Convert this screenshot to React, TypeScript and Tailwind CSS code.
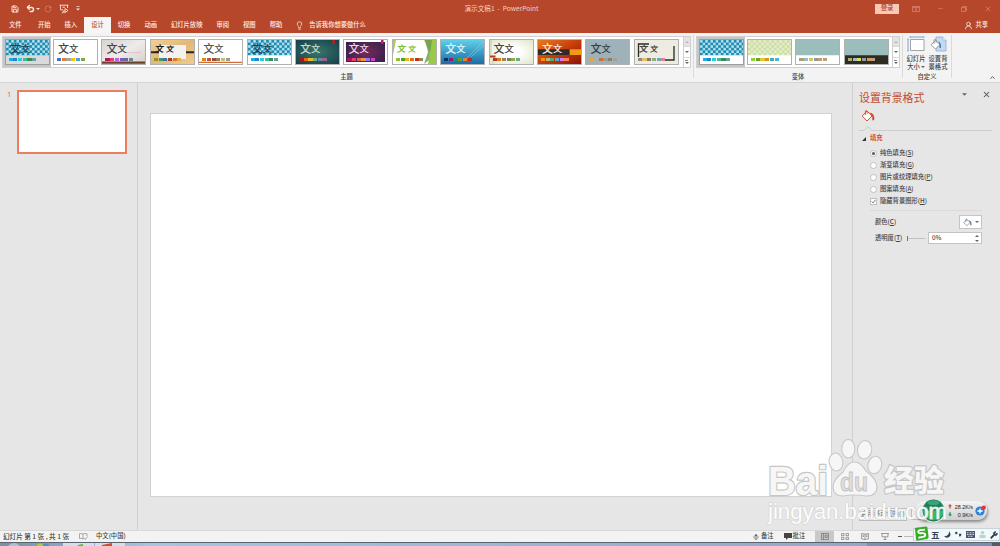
import React from "react";
import clsx from "clsx";
import { ChevronUp, Lightbulb, Minus, Save, Undo2, RotateCw, UserRound, Wrench, X } from "lucide-react";

interface Theme {
  bg: string;
  ink?: string;
  brush?: boolean;
  selected?: boolean;
  swatches: string[];
  decor?: React.ReactNode;
}

const BLUE = ["#1cade4", "#2683c6", "#27ced7", "#42ba97", "#3e8853", "#62a39f"];

const tabs = ["开始", "插入", "设计", "切换", "动画", "幻灯片放映", "审阅", "视图", "帮助"];

const themes: Theme[] = [
  { bg: "bg-[#d9dadb]", ink: "text-[#20404e]", selected: true, swatches: BLUE, decor: <Pattern id="t1" base="#1b8db5" dot="#b9e0ec" /> },
  { bg: "bg-white", ink: "text-[#444]", swatches: ["#4472c4", "#ed7d31", "#a5a5a5", "#ffc000", "#5b9bd5", "#70ad47"] },
  {
    bg: "bg-linear-to-br from-[#d8d2d0] via-[#efebea] to-[#d5cecb]",
    ink: "text-[#444]",
    swatches: ["#b31166", "#e33d6f", "#b560f0", "#7e5fa8", "#6c62b0", "#5f89a0"],
    decor: (
      <>
        <path d="M23 12.6H39" stroke="#e3a9b4" strokeWidth=".6" />
        <path d="M0 22.6H43" stroke="#6b4128" strokeWidth="2.4" />
        <path d="M0 21.5H43" stroke="#b18a5c" strokeWidth=".5" />
      </>
    ),
  },
  {
    bg: "bg-linear-to-br from-[#f0cf98] via-[#e2b878] to-[#efcc90]",
    ink: "text-[#1c1c1c]",
    brush: true,
    swatches: ["#83992a", "#3c9770", "#44709d", "#a23c33", "#d97828", "#deb340"],
    decor: (
      <>
        <path d="M0 12.3H43" stroke="#2b2724" strokeWidth="2" />
        <path d="M8 5H35V19H8Z" fill="#f3f2f0" />
      </>
    ),
  },
  {
    bg: "bg-white",
    ink: "text-[#555]",
    swatches: ["#e48312", "#bd582c", "#865640", "#9b8357", "#c2bc80", "#94a088"],
    decor: <path d="M0 22.3H43" stroke="#d46a35" strokeWidth="1.2" />,
  },
  { bg: "bg-white", ink: "text-[#20404e]", swatches: BLUE, decor: <Pattern id="t6" base="#1b8db5" dot="#b9e0ec" /> },
  {
    bg: "bg-radial from-[#39776b] to-[#163f49]",
    ink: "text-[#c9dcd7]",
    swatches: ["#b01513", "#ea6312", "#e6b729", "#6aac90", "#5f8ca0", "#9e5e9b"],
    decor: <path d="M36.5 0H39V4H36.5Z" fill="#c11d1b" />,
  },
  {
    bg: "bg-radial from-[#74295d] to-[#2b1d45] ring-2 ring-inset ring-white",
    ink: "text-[#ead6e6]",
    swatches: ["#b31166", "#e33d6f", "#e45f3c", "#e9943a", "#9b6bf2", "#d53dd0"],
    decor: <path d="M37 0H39.5V4H37Z" fill="#c01872" />,
  },
  {
    bg: "bg-white",
    ink: "text-[#7fbf2d]",
    brush: true,
    swatches: ["#90c226", "#54a021", "#e6b91e", "#e76618", "#c42f1a", "#918655"],
    decor: (
      <>
        <path d="M0 0H3L0 15Z" fill="#a4cf56" />
        <path d="M31 0H43V24H35L37 12Z" fill="#9bcb45" />
        <path d="M32 0H39L36 20L31 24L35 12Z" fill="#6a9a50" opacity=".8" />
      </>
    ),
  },
  {
    bg: "bg-linear-to-b from-[#60cfe8] to-[#1b6ea6]",
    ink: "text-[#e8f7fc]",
    swatches: ["#052f61", "#a50e82", "#14967c", "#6a9e1f", "#e87d37", "#c62324"],
    decor: <path d="M26 18L43 1M30 17L43 5" stroke="#94d9ee" strokeWidth=".5" />,
  },
  {
    bg: "bg-radial from-white from-30% to-[#dfe6c6]",
    ink: "text-[#444]",
    swatches: ["#b5391c", "#de7e18", "#9f8351", "#728653", "#92aa4c", "#6aac91"],
    decor: (
      <>
        <path d="M1 0V15M3 18V24" stroke="#aaa88f" strokeWidth=".5" />
        <path d="M0 15.5H5.5V17.5H0Z" fill="#b5391c" />
      </>
    ),
  },
  {
    bg: "bg-linear-to-br from-[#e87a1c] via-[#c73d0c] to-[#8f1203]",
    ink: "text-[#f7eae4]",
    swatches: ["#f09415", "#c1b56b", "#4baf73", "#5aa6c0", "#d17df9", "#fa7e5c"],
    decor: (
      <>
        <path d="M0 9.3H31V15H0Z" fill="#2e2b29" />
        <path d="M32 9.3H43V15H32Z" fill="#f09a18" />
      </>
    ),
  },
  { bg: "bg-[#9fb2ba]", ink: "text-[#333f45]", swatches: ["#f0a22e", "#a5b0b0", "#cf6b3c", "#93a08a", "#8a8268", "#ab9d92"] },
  {
    bg: "bg-[#eeebe1]",
    ink: "text-[#444]",
    brush: true,
    swatches: ["#8c8d86", "#e6c069", "#897b61", "#8dab8e", "#77a2bb", "#e28394"],
    decor: <path d="M3.5 17V4H14M30 20H39V6" fill="none" stroke="#262d20" strokeWidth="1.3" />,
  },
];

const variants: Theme[] = [
  { bg: "bg-white", selected: true, swatches: BLUE, decor: <Pattern id="v1" base="#1b8db5" dot="#b9e0ec" /> },
  { bg: "bg-white", swatches: ["#99cb38", "#63a537", "#e8c52a", "#d8941b", "#44a8b8", "#4eb3cf"], decor: <Pattern id="v2" base="#cddfa6" dot="#e5edcb" /> },
  { bg: "bg-white", swatches: ["#a5a07a", "#9bbfc0", "#d0c765", "#8c99a0", "#d09a5c", "#b8a088"], decor: <path d="M0 0H43V15.3H0Z" fill="#9bbebd" /> },
  { bg: "bg-[#2e2b21]", swatches: ["#b0a97c", "#9bbfc0", "#e0dc58", "#8ca0aa", "#d39a55", "#b8a080"], decor: <path d="M0 0H43V15.3H0Z" fill="#9bbebd" /> },
];

function Pattern({ id, base, dot }: { id: string; base: string; dot: string }) {
  return (
    <>
      <pattern id={id} width="5.2" height="5.2" patternUnits="userSpaceOnUse">
        <rect width="5.2" height="5.2" fill={base} />
        <rect x=".1" y=".1" width="2.5" height="2.5" rx=".5" fill={dot} />
        <rect x="2.7" y="2.7" width="2.5" height="2.5" rx=".5" fill={dot} />
      </pattern>
      <rect width="43" height="15.3" fill={`url(#${id})`} />
    </>
  );
}

function Thumb({ theme }: { theme: Theme }) {
  return (
    <div className={clsx("flex h-[30px] w-[48.4px] shrink-0 items-center justify-center", theme.selected && "bg-[#c6c6c6]")}>
      <div className={clsx("relative h-[26px] w-[45px] overflow-hidden border", theme.selected ? "border-[#9d9d9d]" : "border-[#b0b0b0]", theme.bg)}>
        <svg className="absolute inset-0 size-full" viewBox="0 0 43 24" preserveAspectRatio="none">
          {theme.decor}
        </svg>
        {theme.ink && (
          <div className={clsx("absolute top-[2px] left-[4px] flex items-center leading-[13px]", theme.ink, theme.brush && "-skew-x-6 gap-[2px] font-bold")}>
            <span className={theme.brush ? "text-[9px]" : "text-[11px]"}>文</span>
            <span className={theme.brush ? "text-[8px]" : "text-[9.3px]"}>文</span>
          </div>
        )}
        <div className="absolute bottom-[3px] left-[3px] flex gap-[0.6px]">
          {theme.swatches.map((c, i) => (
            <span key={i} className="h-[3px] w-[4.1px]" style={{ backgroundColor: c }} />
          ))}
        </div>
      </div>
    </div>
  );
}

function GalleryScroll() {
  return (
    <div className="flex w-[7.5px] flex-col border-l border-[#d0d0d0] bg-white text-[#666]">
      <div className="flex flex-1 items-center justify-center bg-[#e3e3e3]">
        <Triangle up className="fill-[#b8b8b8]" />
      </div>
      <div className="flex flex-1 items-center justify-center border-y border-[#d8d8d8]">
        <Triangle />
      </div>
      <div className="flex flex-1 flex-col items-center justify-center gap-px">
        <span className="h-px w-[3px] bg-[#888]" />
        <Triangle />
      </div>
    </div>
  );
}

function Triangle({ up, className = "fill-[#666]" }: { up?: boolean; className?: string }) {
  return (
    <svg className={clsx("h-[2px] w-[4px] shrink-0", className)} viewBox="0 0 4 2">
      <path d={up ? "M0 2L2 0L4 2Z" : "M0 0L2 2L4 0Z"} />
    </svg>
  );
}

function BucketIcon({ className, drip = "#d2472a" }: { className?: string; drip?: string }) {
  return (
    <svg className={className} viewBox="0 0 14 14" fill="none">
      <path d="M6 2L11 7L6 12L1.2 7Z" fill="white" stroke="currentColor" strokeWidth="1" />
      <path d="M4.3 6V2.2Q5.2 .4 6.2 2.2V5" stroke="currentColor" strokeWidth=".9" />
      <path d="M8.5 3.6Q14 4.5 13.2 11L11.4 11.6L11.2 7Z" fill={drip} />
    </svg>
  );
}

function TitleBar() {
  return (
    <div className="flex h-[17px] items-center text-[#fbe3da]">
      <div className="flex flex-1 items-center pl-[11px]">
        <Save className="size-[8px]" strokeWidth={3} />
        <Undo2 className="ml-[7px] size-[9px]" strokeWidth={4} />
        <Triangle className="ml-[1px] fill-[#fbe3da]" />
        <RotateCw className="ml-[4px] size-[8px] text-[#d27c65]" strokeWidth={2.4} />
        <svg className="ml-[7px] size-[10px]" viewBox="0 0 10 10" fill="none" stroke="currentColor" strokeWidth=".9">
          <path d="M.5 1.2H9.5M1.5 1.2V5.8H4M8.5 1.2V4M3 9.3L5 6.5V9.3M3.5 3.2H6" />
          <path d="M6 4.5L9 6.5L6 8.5Z" />
        </svg>
        <svg className="ml-[7px] h-[5px] w-[4px] fill-[#fbe3da]" viewBox="0 0 4 5">
          <path d="M.5 0H3.5V.8H.5ZM0 2.5H4L2 4.5Z" />
        </svg>
      </div>
      <span className="pb-px text-[6.6px] text-[#f6cfc2]">演示文稿1&nbsp; - &nbsp;PowerPoint</span>
      <div className="flex flex-1 items-center justify-end pr-[8px] text-[#d98672]">
        <span className="flex h-[10px] w-[24px] items-center justify-center bg-[#fbc8b5] text-[6.3px] font-medium text-[#a8452c]">登录</span>
        <svg className="ml-[13px] h-[6px] w-[8px]" viewBox="0 0 8 6" fill="none" stroke="currentColor" strokeWidth=".8">
          <path d="M.4 .4H7.6V5.6H.4ZM.4 1.6H7.6M4 5V2.6M3 3.6L4 2.6L5 3.6" />
        </svg>
        <Minus className="ml-[17px] size-[7px]" strokeWidth={2} />
        <svg className="ml-[17px] size-[6px]" viewBox="0 0 6 6" fill="none" stroke="currentColor" strokeWidth=".8">
          <path d="M.4 1.6H4.4V5.6H.4ZM1.6 1.6V.4H5.6V4.4H4.4" />
        </svg>
        <X className="ml-[17px] size-[8px]" strokeWidth={2.2} />
      </div>
    </div>
  );
}

function TabBar() {
  return (
    <div className="flex h-[16px] items-stretch text-[6.3px] font-medium text-[#fdeee8]">
      <div className="flex w-[31px] items-center pl-[9px]">文件</div>
      {tabs.map((tab) => (
        <div key={tab} className={clsx("flex items-center px-[7px]", tab === "设计" && "bg-[#f6f5f4] text-[#c04a2e]")}>
          {tab}
        </div>
      ))}
      <div className="flex items-center pl-[6px]">
        <Lightbulb className="mr-[5px] size-[9px]" strokeWidth={2} />
        告诉我你想要做什么
      </div>
      <div className="ml-auto flex items-center gap-[2px] pr-[12px]">
        <UserRound className="size-[9px]" strokeWidth={2} />
        共享
      </div>
    </div>
  );
}

function Ribbon() {
  return (
    <div className="flex h-[50px] border-b border-[#d4d4d4] bg-[#f3f3f3] text-[6.3px] font-medium text-[#444]">
      <div className="flex w-[691px] flex-col pt-[3px] pl-[2px]">
        <div className="flex h-[32px] justify-between border border-[#d0d0d0] bg-white">
          <div className="flex items-center">
            {themes.map((theme, i) => (
              <Thumb key={i} theme={theme} />
            ))}
          </div>
          <GalleryScroll />
        </div>
        <span className="pt-[6px] text-center">主题</span>
      </div>
      <div className="mt-[2px] ml-[2px] h-[43px] w-px bg-[#dadada]" />
      <div className="flex w-[206px] flex-col pt-[3px] pl-[2px]">
        <div className="flex h-[32px] justify-between border border-[#d0d0d0] bg-white">
          <div className="flex items-center">
            {variants.map((theme, i) => (
              <Thumb key={i} theme={theme} />
            ))}
          </div>
          <GalleryScroll />
        </div>
        <span className="pt-[6px] text-center">变体</span>
      </div>
      <div className="mt-[2px] ml-[2px] h-[43px] w-px bg-[#dadada]" />
      <div className="flex w-[48px] flex-col items-center pt-[3px] leading-[8px]">
        <div className="flex h-[37px] gap-[3px]">
          <div className="flex w-[19px] flex-col items-center whitespace-nowrap">
            <svg className="mb-[3px] h-[16px] w-[18px]" viewBox="0 0 18 16" fill="none">
              <path d="M3.5 3.5H17V14.5H3.5Z" fill="white" stroke="#8e8e8e" strokeWidth=".8" />
              <path d="M3 1H17M1 3V15" stroke="#77a5d4" strokeWidth="1" />
              <path d="M3 0V2M17 0V2M0 3H2M0 15H2" stroke="#77a5d4" strokeWidth=".6" />
            </svg>
            <span>幻灯片</span>
            <span className="flex items-center gap-px">大小 <Triangle className="h-[2px] w-[3px] fill-[#666]" /></span>
          </div>
          <div className="flex w-[19px] flex-col items-center whitespace-nowrap">
            <svg className="mb-[3px] h-[16px] w-[17px]" viewBox="0 0 17 16" fill="none">
              <path d="M6 1H13L16 4V15H6Z" fill="#c5daf1" stroke="#87aedb" strokeWidth=".8" />
              <path d="M13 1V4H16" fill="white" stroke="#87aedb" strokeWidth=".6" />
              <path d="M5.5 4.5L10 8.5L5.5 13L1 8.8Z" fill="white" stroke="#858585" strokeWidth=".8" />
              <path d="M4 8V4Q5 2.4 6 4V7" stroke="#858585" strokeWidth=".7" />
              <path d="M8.5 5.5Q11.5 7 11 12L9.5 12V9Z" fill="#3c78bd" />
            </svg>
            <span>设置背</span>
            <span>景格式</span>
          </div>
        </div>
        <span>自定义</span>
      </div>
      <div className="mt-[2px] h-[43px] w-px bg-[#dadada]" />
      <ChevronUp className="mt-auto mr-[4px] mb-[1px] ml-auto size-[7px]" strokeWidth={3} />
    </div>
  );
}

function FillOption({ label, accel, checked, box }: { label: string; accel: string; checked?: boolean; box?: boolean }) {
  return (
    <label className="flex h-[12.1px] items-center gap-[3px]">
      <span className={clsx("flex size-[7px] items-center justify-center border border-[#c0c0c0] bg-white", !box && "rounded-full")}>
        {checked && !box && <span className="size-[3px] rounded-full bg-[#555]" />}
        {checked && box && (
          <svg className="size-[5px]" viewBox="0 0 5 5" fill="none" stroke="#555" strokeWidth=".8">
            <path d="M.7 2.5L2 3.9L4.4 .9" />
          </svg>
        )}
      </span>
      <span>
        {label}(<u>{accel}</u>)
      </span>
    </label>
  );
}

function FormatPane() {
  return (
    <aside className="flex w-[148px] flex-col border-l border-[#cfcfcf] pr-[8px] pl-[6px] text-[6.3px] font-medium text-[#444]">
      <div className="flex h-[27px] items-center pt-px">
        <h2 className="text-[10.9px] font-normal text-[#c24a31]">设置背景格式</h2>
        <Triangle className="mb-[5px] ml-auto h-[3px] w-[5px] fill-[#666]" />
        <X className="mr-px mb-[5px] ml-[15px] size-[9px] text-[#555]" strokeWidth={2.8} />
      </div>
      <BucketIcon className="-mt-px ml-[2px] size-[14px] text-[#d4542f]" />
      <svg className="mt-[3px] h-[5px] w-full shrink-0" viewBox="0 0 133 5" fill="none" stroke="#cacaca">
        <path d="M0 4.5H5L9 .8L13 4.5H133" strokeWidth=".9" />
      </svg>
      <div className="flex h-[15px] items-center pl-[3px] font-bold text-[#d8502c]">
        <svg className="mr-[4px] size-[4px] fill-[#333]" viewBox="0 0 4 4">
          <path d="M4 0V4H0Z" />
        </svg>
        填充
      </div>
      <div className="mt-[1px] flex flex-col pl-[11px]">
        <FillOption label="纯色填充" accel="S" checked />
        <FillOption label="渐变填充" accel="G" />
        <FillOption label="图片或纹理填充" accel="P" />
        <FillOption label="图案填充" accel="A" />
        <FillOption label="隐藏背景图形" accel="H" checked box />
        <div className="mt-[3px] mr-[10px] border-t border-[#dadada]" />
      </div>
      <div className="mt-[3px] flex h-[16px] items-center justify-between pr-[10px] pl-[16px]">
        <span>颜色(<u>C</u>)</span>
        <div className="flex h-[14px] w-[23px] items-center justify-center gap-[3px] border border-[#c4c4c4] bg-white">
          <BucketIcon className="size-[9px] text-[#777]" drip="#3e6f9f" />
          <Triangle />
        </div>
      </div>
      <div className="flex h-[16px] items-center pr-[10px] pl-[16px]">
        <span>透明度(<u>T</u>)</span>
        <span className="ml-[5px] h-[5px] w-px bg-[#777]" />
        <span className="h-px w-[17px] bg-[#c0c0c0]" />
        <div className="ml-auto flex h-[12px] w-[54px] items-center justify-between border border-[#c4c4c4] bg-white pr-[2px] pl-[3px]">
          0%
          <span className="flex flex-col gap-[3px]">
            <Triangle up />
            <Triangle />
          </span>
        </div>
      </div>
    </aside>
  );
}

function StatusBar() {
  return (
    <div className="flex h-[12px] items-center border-t border-[#d8d8d8] bg-[#f3f3f3] text-[6.3px] font-medium text-[#444]">
      <span className="pl-[3px] text-[6.6px]">幻灯片 第 1 张 , 共 1 张</span>
      <svg className="mr-[8px] ml-[10px] h-[7px] w-[9px]" viewBox="0 0 9 7" fill="none" stroke="#888" strokeWidth=".7">
        <path d="M4 1V6Q2.5 5 .5 5.5V.8Q2.5 0 4 1Q5.5 0 8 .8V3M4 6L5 5.5M5.5 5L6.5 6.5L8.5 3.5" />
      </svg>
      <span>中文(中国)</span>
      <div className="ml-auto flex h-full w-[247px] items-center">
        <svg className="mr-[2px] size-[6px]" viewBox="0 0 6 6" stroke="#555" strokeWidth=".6">
          <path d="M3 .2L4.2 1.8H1.8ZM0 3H6M1.2 4.3H4.8M2 5.6H4" fill="#555" />
        </svg>
        备注
        <svg className="mr-[1px] ml-[10px] h-[7px] w-[8px] fill-[#444]" viewBox="0 0 8 7">
          <path d="M0 0H8V5H4L2 7V5H0Z" />
        </svg>
        批注
        <span className="ml-[10px] flex h-full w-[19px] items-center justify-center bg-[#c9c9c9]">
          <svg className="h-[7px] w-[8px]" viewBox="0 0 8 7" fill="none" stroke="#777" strokeWidth=".8">
            <path d="M.4 .4H7.6V6.6H.4ZM2.4 .4V6.6M4 2.2H6.2V4.5H4Z" />
          </svg>
        </span>
        <svg className="ml-[7px] h-[7px] w-[8px]" viewBox="0 0 8 7" fill="none" stroke="#777" strokeWidth=".7">
          <path d="M.4 .4H3V2.6H.4ZM5 .4H7.6V2.6H5ZM.4 4.3H3V6.5H.4ZM5 4.3H7.6V6.5H5Z" />
        </svg>
        <svg className="ml-[12px] h-[7px] w-[8px]" viewBox="0 0 8 7" fill="none" stroke="#777" strokeWidth=".7">
          <path d="M4 1V6.5M.4 .5L4 1.2L7.6 .5V5.8L4 6.5L.4 5.8ZM1.5 2.2H3M1.5 3.5H3M5 2.2H6.6M5 3.5H6.6" />
        </svg>
        <svg className="ml-[12px] h-[7px] w-[8px]" viewBox="0 0 8 7" fill="none" stroke="#777" strokeWidth=".7">
          <path d="M0 .5H8M1 .5V3.8H7V.5M4 3.8V6.4M2.5 6.5H5.5" />
        </svg>
        <span className="ml-[9px] h-px w-[4px] bg-[#555]" />
        <span className="ml-[2px] h-px w-[12px] bg-[#bbb]" />
      </div>
    </div>
  );
}

function Taskbar() {
  return (
    <div className="flex h-[4px] border-t border-[#59646f] bg-linear-to-r from-[#7890aa] via-[#a5c4e6] via-15% to-[#8aa5c2]">
      <svg className="h-[4px] w-[126px]" viewBox="0 0 126 4">
        <circle cx="14" cy="7" r="7" fill="#a7c4d6" />
        <circle cx="40" cy="4" r="3.4" fill="#b8c832" />
        <circle cx="46" cy="4" r="3.4" fill="#3d98d0" />
        <path d="M63 0H94V4H63ZM95 0H125V4H95Z" fill="#d4dfeb" />
        <path d="M76 4Q78 1 83 1V4Z" fill="#64b94b" />
        <path d="M102 2L112 0V4H102Z" fill="#cf4c2c" />
      </svg>
      <div className="ml-auto h-full w-[125px] bg-[#627d9c] opacity-50" />
      <div className="h-full w-[8px] bg-[#4e5d6e]" />
    </div>
  );
}

// Network speed ball of the desktop assistant
function SpeedWidget() {
  return (
    <div className="absolute top-[501px] left-[915px] flex h-[19px] w-[72px] items-center rounded-full bg-linear-to-b from-[#f4f4f4] to-[#cfcfcf] text-[5.4px] leading-[8px] text-[#222] shadow-[1px_2px_3px_rgba(0,0,0,0.4)]">
      <svg className="ml-[6px] size-[25px] shrink-0" viewBox="0 0 25 25">
        <circle cx="12.5" cy="12.5" r="12" fill="#e6efe9" />
        <circle cx="12.5" cy="12.5" r="11" fill="#16835a" />
        <path d="M1.6 12.5H23.4A11 11 0 0 1 1.6 12.5Z" fill="#38b866" />
        <ellipse cx="12.5" cy="4.7" rx="6" ry="2.4" fill="#5bb592" opacity=".6" />
      </svg>
      <svg className="ml-[2px] h-[13px] w-[4px] shrink-0" viewBox="0 0 4 13">
        <path d="M2 0L4 2.2H2.6V4.5H1.4V2.2H0Z" fill="#e23b2c" />
        <path d="M2 12.5L4 10.3H2.6V8H1.4V10.3H0Z" fill="#1d9a55" />
      </svg>
      <div className="flex w-[21px] flex-col items-end font-[Liberation_Sans] whitespace-nowrap">
        <span>28.2K/s</span>
        <span>0.9K/s</span>
      </div>
      <svg className="ml-[2px] size-[11px] shrink-0" viewBox="0 0 11 11">
        <circle cx="5" cy="6" r="4.6" fill="#2d7fd6" />
        <path d="M5 3.4V8.6M2.4 6H7.6" stroke="white" strokeWidth="1.3" />
        <circle cx="8.8" cy="2.6" r="2.1" fill="#e23632" />
      </svg>
    </div>
  );
}

function InputMethodBar() {
  return (
    <div className="absolute top-[528px] left-[913px] flex h-[13px] w-[87px] items-center border border-[#c9d3da] bg-[#f3f8fb] text-[#33415c]">
      <svg className="-mt-[2px] h-[15px] w-[15px] shrink-0" viewBox="0 0 15 15">
        <path d="M1 3Q0 2 2 1.8L12 .4Q13.5 .2 13.5 2L14.6 11Q14.8 12.5 13 13L4 14.6Q2.3 15 2 13.2Z" fill="#35ac22" />
        <path d="M11 3.6L6 4.1Q3.8 4.6 4.4 6.4Q4.8 7.5 7.3 7.2Q11 6.8 11.2 8.8Q11.2 10.7 9 10.9L4.4 11.7" fill="none" stroke="white" strokeWidth="1.9" />
      </svg>
      <span className="ml-[2px] text-[8.5px] leading-none font-bold">五</span>
      <svg className="ml-[4px] size-[7px] shrink-0" viewBox="0 0 7 7" fill="currentColor">
        <path d="M5 0Q8 4 5 6Q2.5 7.8 0 5.3Q5.5 5.3 5 0Z" />
      </svg>
      <svg className="ml-[4px] h-[7px] w-[7px] shrink-0" viewBox="0 0 7 7" fill="currentColor">
        <circle cx="1.3" cy="2" r="1.2" />
        <path d="M4 2.8H6.4Q6.7 5 4.2 6.3Q5.2 5 4 4.6Z" />
      </svg>
      <svg className="ml-[4px] h-[7px] w-[9px] shrink-0" viewBox="0 0 9 7">
        <path d="M0 0H9V7H0Z" fill="#4b5970" />
        <path d="M1 1.8H8M1 3.5H8M2 5.3H7" stroke="#f3f8fb" strokeWidth=".8" strokeDasharray="1 .5" />
      </svg>
      <svg className="ml-[4px] size-[7px] shrink-0 fill-[#b5d6ca]" viewBox="0 0 7 7">
        <circle cx="3.5" cy="1.8" r="1.8" />
        <path d="M.5 7V4H6.5V7Z" />
      </svg>
      <Wrench className="ml-[4px] size-[8px] shrink-0 fill-current" strokeWidth={2} />
    </div>
  );
}

function Watermark() {
  return (
    <svg
      className="pointer-events-none absolute top-[430px] left-[760px] h-[100px] w-[200px] font-[Liberation_Sans,Noto_Sans_CJK_SC,sans-serif] font-bold"
      viewBox="0 0 200 100"
    >
      <g stroke="#c6c6c6" strokeWidth="2.4" strokeLinejoin="round" fill="#f6f6f6" paintOrder="stroke">
        <text x="8" y="64.5" fontSize="40.5" textLength="60" lengthAdjust="spacingAndGlyphs">Bai</text>
        <text x="124" y="61" fontSize="30" textLength="60" lengthAdjust="spacingAndGlyphs" fontWeight="900">经验</text>
      </g>
      <g fill="#f6f6f6" stroke="#c8c8c8" strokeWidth="1.1">
        <ellipse cx="76" cy="32" rx="6.8" ry="9" transform="rotate(-10 76 32)" />
        <ellipse cx="88.3" cy="18.7" rx="6.6" ry="9.3" />
        <ellipse cx="104.6" cy="19.8" rx="7.1" ry="9.3" transform="rotate(10 104.6 19.8)" />
        <ellipse cx="114.8" cy="35" rx="6.9" ry="8.8" transform="rotate(15 114.8 35)" />
        <path d="M94 32Q101 32 106 41Q117 49 117 57Q117 66 106 66Q94 64 83 66Q73 66 73 57Q73 50 83 42Q88 32 94 32Z" />
      </g>
      <text x="80" y="60.5" fontSize="25" textLength="28" lengthAdjust="spacingAndGlyphs" fill="#dedede" stroke="#c2c2c2" strokeWidth=".8">du</text>
      <text
        x="8"
        y="89"
        fontSize="22"
        fontWeight="400"
        textLength="179"
        lengthAdjust="spacingAndGlyphs"
        fill="#fff"
        stroke="#d2d2d2"
        strokeWidth="1.2"
        paintOrder="stroke"
        opacity=".92"
      >
        jingyan.baidu.com
      </text>
    </svg>
  );
}

export default function App() {
  return (
    <div className="relative flex h-[546px] w-[1000px] flex-col overflow-hidden bg-[#e6e6e6] font-[Noto_Sans_CJK_SC,sans-serif] leading-none">
      <header className="bg-[#b7472a]">
        <TitleBar />
        <TabBar />
      </header>
      <Ribbon />
      <main className="flex flex-1">
        <div className="flex w-[138px] border-r border-[#cfcfcf] pt-[7px] pl-[7px]">
          <span className="w-[10px] pt-[1px] font-[Noto_Sans] text-[7.5px] text-[#e0694a]">1</span>
          <div className="h-[64px] w-[110px] border-2 border-[#ee7d60] bg-white" />
        </div>
        <div className="flex-1 pt-[30px] pl-[12px]">
          <div className="h-[384px] w-[682px] border border-[#d2d2d2] bg-white" />
        </div>
        <FormatPane />
      </main>
      <StatusBar />
      <Taskbar />

      <div className="absolute top-[508px] left-[859px] flex h-[13px] w-[48px] items-center justify-center border border-[#bdbdbd] bg-[#f1f1f1] text-[6.3px] whitespace-nowrap text-[#555]">
        启用移动切换( )
      </div>
      <div className="absolute top-[508px] left-[911px] h-[12px] w-[14px] border border-[#bdbdbd] bg-[#f1f1f1]" />
      <SpeedWidget />
      <Watermark />
      <InputMethodBar />
    </div>
  );
}
